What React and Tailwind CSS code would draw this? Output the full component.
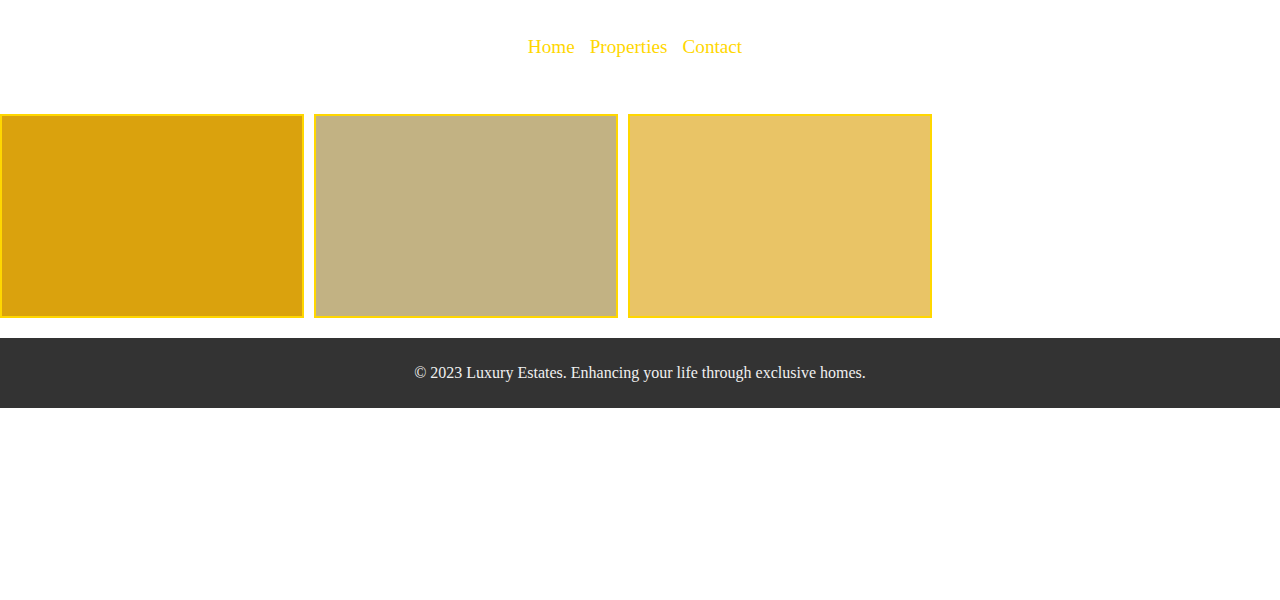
export default function App() {
  return (
    <div className="bg-white min-h-[600px]" style={{ fontFamily: '"Liberation Serif", serif' }}>
      <header className="pt-[35px] pb-[56px]">
        <nav className="flex justify-center gap-[15px] pr-[10px] text-[19.2px] leading-[23px] text-[#FFD700]">
          <a href="#">Home</a>
          <a href="#">Properties</a>
          <a href="#">Contact</a>
        </nav>
      </header>
      <section className="flex gap-[10px]">
        <div className="w-[304px] h-[204px] border-2 border-[#FFD700] bg-[#DAA20D]" />
        <div className="w-[304px] h-[204px] border-2 border-[#FFD700] bg-[#C2B283]" />
        <div className="w-[304px] h-[204px] border-2 border-[#FFD700] bg-[#E9C466]" />
      </section>
      <footer className="mt-[20px] h-[70px] bg-[#333333] flex items-center justify-center text-[16px] text-[#f0f0f0]">
        © 2023 Luxury Estates. Enhancing your life through exclusive homes.
      </footer>
    </div>
  );
}
